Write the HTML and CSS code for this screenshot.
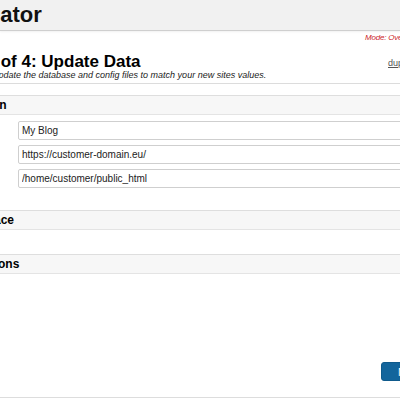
FILE: index.html
```html
<!DOCTYPE html>
<html lang="en">
<head>
<meta charset="utf-8">
<title>Duplicator Installer</title>
<link rel="stylesheet" href="styles.css">
</head>
<body>
<header class="topbar">
  <h1 class="brand">Duplicator</h1>
</header>
<div class="mode">Mode: Overwrite Install</div>
<div class="step-head">
  <div class="step-titles">
    <h2 class="step-title">Step 3 of 4: Update Data</h2>
    <p class="step-sub">Update the database and config files to match your new sites values.</p>
  </div>
  <a class="log-link" href="#">dup-installer-log.txt</a>
</div>

<div class="bar bar-first"><span class="bar-label bar-label-setup">New Setup Information</span></div>
<div class="fields">
  <input class="field" type="text" value="My Blog">
  <input class="field" type="text" value="https://customer-domain.eu/">
  <input class="field" type="text" value="/home/customer/public_html">
</div>

<div class="bar bar-replace"><span class="bar-label bar-label-replace">Replace</span></div>
<div class="bar bar-options"><span class="bar-label bar-label-options">Options</span></div>

<div class="actions">
  <button class="btn-next" type="button">Next</button>
</div>
<footer class="foot"></footer>
</body>
</html>
```
FILE: styles.css
```css
html, body {
  margin: 0;
  padding: 0;
  overflow: hidden;
  background: #ffffff;
  font-family: "Liberation Sans", Arial, sans-serif;
  color: #000;
}

body {
  width: 400px;
  height: 400px;
  display: flex;
  flex-direction: column;
}

.topbar {
  height: 30px;
  background: #f1f1f1;
  border-bottom: 1px solid #cfcfcf;
  box-shadow: 0 1px 2px rgba(0,0,0,0.06);
  flex: none;
}

.brand {
  margin: 0 0 0 -67px;
  font-size: 22px;
  font-weight: bold;
  line-height: 30px;
  white-space: nowrap;
  color: #111;
}

.mode {
  flex: none;
  padding-left: 365px;
  font-size: 8px;
  line-height: 11px;
  padding-top: 1px;
  font-style: italic;
  letter-spacing: -0.2px;
  color: #cc1f2b;
  white-space: nowrap;
}

.step-head {
  flex: none;
  margin-top: 10px;
  display: flex;
  align-items: flex-start;
  padding-bottom: 3px;
  border-bottom: 1px solid #dcdcdc;
  white-space: nowrap;
}

.step-titles {
  flex: 0 0 388px;
  min-width: 0;
}

.step-title {
  margin: 1px 0 0 -55px;
  font-size: 17px;
  line-height: 16px;
  font-weight: bold;
}

.step-sub {
  margin: 0 0 0 -8px;
  font-size: 9px;
  line-height: 10px;
  font-style: italic;
  color: #222;
}

.log-link {
  flex: none;
  margin-top: 5px;
  font-size: 9px;
  line-height: 11px;
  color: #555;
  text-decoration: underline;
}

.bar {
  flex: none;
  height: 18px;
  background: #f7f7f7;
  border-top: 1px solid #dedede;
  border-bottom: 1px solid #e4e4e4;
  white-space: nowrap;
  display: flex;
  align-items: center;
}

.bar-first { margin-top: 11px; }
.bar-replace { margin-top: 22px; }
.bar-options { margin-top: 24px; }

.bar-label {
  font-size: 12px;
  font-weight: bold;
  line-height: 18px;
}
.bar-label-setup { margin-left: -124px; }
.bar-label-replace { margin-left: -32px; }
.bar-label-options { margin-left: -26px; }

.fields {
  flex: none;
  margin-top: 6px;
  margin-right: -60px;
  padding-left: 18px;
  display: flex;
  flex-direction: column;
  gap: 5px;
}

.field {
  box-sizing: border-box;
  height: 19px;
  margin: 0;
  padding: 0 3px;
  border: 1px solid #cfcfcf;
  border-radius: 2px;
  font-family: "Liberation Sans", Arial, sans-serif;
  font-size: 10px;
  color: #222;
  background: #fff;
  outline: none;
}

.actions {
  flex: 1;
  display: flex;
  align-items: flex-start;
  padding-top: 88px;
  padding-left: 381px;
}

.btn-next {
  flex: none;
  width: 70px;
  height: 19px;
  padding: 0 0 0 16px;
  text-align: left;
  background: #13659c;
  border: 1px solid #0f5a8c;
  border-radius: 3px;
  color: #fff;
  font-family: "Liberation Sans", Arial, sans-serif;
  font-size: 11px;
}

.foot {
  flex: none;
  height: 2px;
  border-top: 1px solid #dddddd;
  background: #fff;
}
```
